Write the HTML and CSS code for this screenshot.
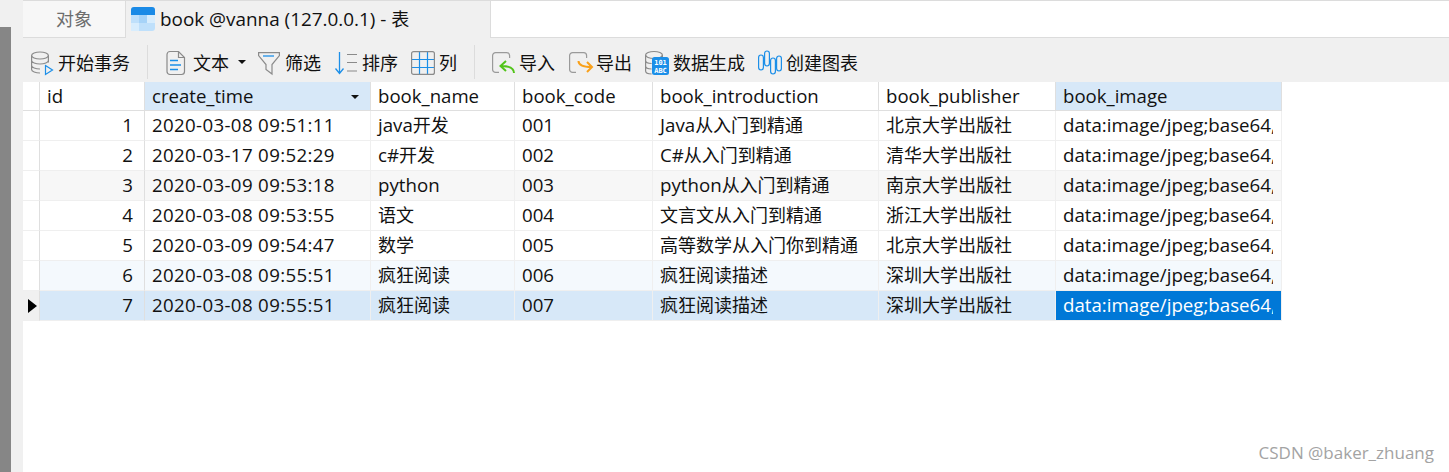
FILE: index.html
```html
<!DOCTYPE html>
<html lang="en">
<head>
    <meta charset="UTF-8">
    <title>book @vanna (127.0.0.1) - 表</title>
    <link rel="stylesheet" href="styles.css">
</head>
<body>
<div class="sidebar"><div class="sidebar-thumb"></div></div>
<div class="main">
    <div class="tabs">
        <div class="tab-objects">对象</div>
        <div class="tab-active">
            <svg class="tab-icon" width="24" height="24" viewBox="0 0 24 24">
                <rect x="0" y="0" width="24" height="24" rx="3" fill="#bfe0fb"/>
                <rect x="8" y="8" width="8" height="8" fill="#a6d3f8"/>
                <rect x="0" y="16" width="8" height="8" fill="#d8edfd"/>
                <rect x="16" y="8" width="8" height="8" fill="#d8edfd"/>
                <path d="M0 8V3a3 3 0 0 1 3-3h18a3 3 0 0 1 3 3v5z" fill="#1a8ae6"/>
            </svg>
            <span><span class="tab-lat">book @vanna (127.0.0.1) - </span>表</span>
        </div>
        <div class="tab-rest"></div>
    </div>

    <div class="toolbar">
        <div class="tool tool-begin">
            <svg width="24" height="26" viewBox="0 0 24 26" fill="none" stroke="#8a8a8a" stroke-width="1.2">
                <ellipse cx="9" cy="5.500" rx="8.400" ry="3.500"/>
                <path d="M.6 5.500v14c0 2 4 3.500 8.400 3.500M17.400 5.500v7M.6 10.500c0 2 4 3.500 8.400 3.500s8.400-1.500 8.400-3.500M.6 15.500c0 2 4 3.500 8.400 3.500"/>
                <path d="M14.500 15.500l7 4.500-7 4.500z" stroke="#1c8fe8" fill="#f0f0f0"/>
            </svg>
            <span>开始事务</span>
        </div>
        <div class="sep"></div>
        <div class="tool tool-text">
            <svg width="21" height="26" viewBox="0 0 21 26" fill="none">
                <path d="M5 1.500h8.500l6 6V21.500a3 3 0 0 1-3 3H5a3 3 0 0 1-3-3v-17a3 3 0 0 1 3-3z" stroke="#8a8a8a" stroke-width="1.200"/>
                <path d="M13.500 1.500v6h6" stroke="#8a8a8a" stroke-width="1.200"/>
                <path d="M5 10.500h8M5 15h11M5 19.500h8" stroke="#1c8fe8" stroke-width="1.300"/>
            </svg>
            <span>文本</span>
            <i class="caret"></i>
        </div>
        <div class="tool tool-filter">
            <svg width="22" height="26" viewBox="0 0 22 26" fill="none">
                <path d="M.6 2.600h20.800v3l-7.400 8.900v9.500l-6-4.500v-5L.6 5.600z" stroke="#8a8a8a" stroke-width="1.200"/>
                <path d="M5 6h11" stroke="#1c8fe8" stroke-width="1.300"/>
            </svg>
            <span>筛选</span>
        </div>
        <div class="tool tool-sort">
            <svg width="23" height="26" viewBox="0 0 23 26" fill="none">
                <path d="M3.500 2v21.500M-.5 18.500l4 5 4-5" stroke="#1c8fe8" stroke-width="1.300"/>
                <path d="M11 4.500h10M11 12.500h10M11 21h10" stroke="#8a8a8a" stroke-width="1.200"/>
            </svg>
            <span>排序</span>
        </div>
        <div class="tool tool-cols">
            <svg width="24" height="24" viewBox="0 0 24 24" fill="none">
                <path d="M8.500 1v22M16.500 1v22M1 8.500h22M1 16.500h22" stroke="#1c8fe8" stroke-width="1.200"/>
                <rect x="0.600" y="0.600" width="22.800" height="22.800" rx="2" stroke="#8a8a8a" stroke-width="1.200"/>
            </svg>
            <span>列</span>
        </div>
        <div class="sep"></div>
        <div class="tool tool-import">
            <svg width="24" height="26" viewBox="0 0 24 26" fill="none">
                <path d="M7 22.400H3.600a3 3 0 0 1-3-3V5.600a3 3 0 0 1 3-3h11a3 3 0 0 1 3 3V8" stroke="#9a9a9a" stroke-width="1.200"/>
                <path d="M22 23c0-4.500-3-7-13-7M14 11l-5.500 5 5.500 5" stroke="#52c41a" stroke-width="2"/>
            </svg>
            <span>导入</span>
        </div>
        <div class="tool tool-export">
            <svg width="24" height="26" viewBox="0 0 24 26" fill="none">
                <path d="M7 22.400H3.600a3 3 0 0 1-3-3V5.600a3 3 0 0 1 3-3h11a3 3 0 0 1 3 3V8" stroke="#9a9a9a" stroke-width="1.200"/>
                <path d="M9.500 11c0 4 3 6 13 6M18 12l5 5-5 5" stroke="#f9a11b" stroke-width="2"/>
            </svg>
            <span>导出</span>
        </div>
        <div class="tool tool-gen">
            <svg width="24" height="26" viewBox="0 0 24 26" fill="none">
                <ellipse cx="9" cy="5" rx="8.400" ry="3.500" stroke="#8a8a8a" stroke-width="1.200"/>
                <path d="M.6 5v16c0 2 3 3 6 3M17.400 5v2M.6 10.500c0 2 3 3 6 3M.6 16c0 2 3 3 6 3" stroke="#8a8a8a" stroke-width="1.200"/>
                <rect x="7" y="7" width="17" height="18" rx="2.500" fill="#1c8fe8"/>
                <text class="gen-label" x="15.500" y="14.500">101</text>
                <text class="gen-label" x="15.500" y="22.500">ABC</text>
            </svg>
            <span>数据生成</span>
        </div>
        <div class="tool tool-chart">
            <svg width="24" height="26" viewBox="0 0 24 26" fill="none" stroke="#1c8fe8" stroke-width="1.200">
                <rect x="0.600" y="5" width="4.800" height="15" rx="2.400"/>
                <rect x="6.600" y="1" width="4.800" height="15" rx="2.400"/>
                <rect x="12.600" y="8" width="4.800" height="16" rx="2.400"/>
                <rect x="18.600" y="6" width="4.800" height="15" rx="2.400"/>
            </svg>
            <span>创建图表</span>
        </div>
    </div>

    <table class="grid">
        <colgroup>
            <col class="col-mark"><col class="col-id"><col class="col-time"><col class="col-name">
            <col class="col-code"><col class="col-intro"><col class="col-pub"><col class="col-image">
        </colgroup>
        <thead>
            <tr>
                <th class="mark"></th>
                <th>id</th>
                <th class="selected">create_time<i class="caret sort-caret"></i></th>
                <th>book_name</th>
                <th>book_code</th>
                <th>book_introduction</th>
                <th>book_publisher</th>
                <th class="selected">book_image</th>
            </tr>
        </thead>
        <tbody>
            <tr>
                <td class="mark"></td><td class="num lat">1</td><td class="time">2020-03-08 09:51:11</td><td><span class="lat">java</span>开发</td><td class="lat">001</td><td><span class="lat">Java</span>从入门到精通</td><td>北京大学出版社</td><td class="lat"><div class="clip">data:image/jpeg;base64,</div></td>
            </tr>
            <tr>
                <td class="mark"></td><td class="num lat">2</td><td class="time">2020-03-17 09:52:29</td><td><span class="lat">c#</span>开发</td><td class="lat">002</td><td><span class="lat">C#</span>从入门到精通</td><td>清华大学出版社</td><td class="lat"><div class="clip">data:image/jpeg;base64,</div></td>
            </tr>
            <tr class="row-grey">
                <td class="mark"></td><td class="num lat">3</td><td class="time">2020-03-09 09:53:18</td><td class="lat">python</td><td class="lat">003</td><td><span class="lat">python</span>从入门到精通</td><td>南京大学出版社</td><td class="lat"><div class="clip">data:image/jpeg;base64,</div></td>
            </tr>
            <tr>
                <td class="mark"></td><td class="num lat">4</td><td class="time">2020-03-08 09:53:55</td><td>语文</td><td class="lat">004</td><td>文言文从入门到精通</td><td>浙江大学出版社</td><td class="lat"><div class="clip">data:image/jpeg;base64,</div></td>
            </tr>
            <tr>
                <td class="mark"></td><td class="num lat">5</td><td class="time">2020-03-09 09:54:47</td><td>数学</td><td class="lat">005</td><td>高等数学从入门你到精通</td><td>北京大学出版社</td><td class="lat"><div class="clip">data:image/jpeg;base64,</div></td>
            </tr>
            <tr class="row-tint">
                <td class="mark"></td><td class="num lat">6</td><td class="time">2020-03-08 09:55:51</td><td>疯狂阅读</td><td class="lat">006</td><td>疯狂阅读描述</td><td>深圳大学出版社</td><td class="lat"><div class="clip">data:image/jpeg;base64,</div></td>
            </tr>
            <tr class="row-current">
                <td class="mark"><i class="pointer"></i></td><td class="num lat">7</td><td class="time">2020-03-08 09:55:51</td><td>疯狂阅读</td><td class="lat">007</td><td>疯狂阅读描述</td><td>深圳大学出版社</td><td class="lat cell-active"><div class="clip">data:image/jpeg;base64,</div></td>
            </tr>
        </tbody>
    </table>

    <div class="watermark">CSDN @baker_zhuang</div>
</div>
</body>
</html>
```

FILE: styles.css
```css
* {
    margin: 0;
    padding: 0;
    box-sizing: border-box;
}

html, body {
    height: 472px;
    overflow: hidden;
}

body {
    display: flex;
    background: #fff;
    color: #111;
    font-family: "Open Sans", "Noto Sans CJK SC", sans-serif;
    font-size: 18px;
}

.sidebar {
    width: 23px;
    flex: none;
    background: #f0f0f0;
    padding-top: 27px;
    height: 100%;
}

.sidebar-thumb {
    width: 11px;
    height: 100%;
    background: #868686;
}

.main {
    flex: 1;
    position: relative;
    display: flex;
    flex-direction: column;
    min-width: 0;
}

/* tab strip */
.tabs {
    display: flex;
    height: 38px;
    background: #f0f0f0;
    border-top: 1px solid #dcdcdc;
}

.tab-objects {
    width: 103px;
    padding-left: 33px;
    line-height: 37px;
    color: #6d6d6d;
    background: #f7f7f7;
    border-right: 1px solid #dcdcdc;
    border-bottom: 1px solid #dcdcdc;
}

.tab-active {
    width: 364px;
    display: flex;
    align-items: center;
    gap: 5px;
    padding-left: 5px;
    padding-bottom: 2px;
}

.tab-lat {
    font-size: 18.9px;
}

.tab-rest {
    flex: 1;
    background: #fff;
    border-left: 1px solid #dcdcdc;
    border-bottom: 1px solid #dcdcdc;
}

/* toolbar */
.toolbar {
    display: flex;
    align-items: center;
    height: 44px;
    background: #f0f0f0;
    padding: 4px 0 0 8px;
}

.tool {
    display: flex;
    align-items: center;
    gap: 3px;
    white-space: nowrap;
}

.tool svg {
    margin-top: 2px;
    overflow: visible;
}

.sep {
    width: 1px;
    height: 34px;
    background: #dcdcdc;
}

.tool-begin { margin-right: 17px; }
.tool-text { margin-left: 17px; gap: 7px; }
.tool-filter { margin-left: 12px; gap: 5px; }
.tool-sort { margin-left: 15px; }
.tool-cols { margin-left: 13px; gap: 4px; }
.tool-cols + .sep { margin-left: 17px; }
.tool-import { margin-left: 17px; }
.tool-export { margin-left: 14px; }
.tool-gen { margin-left: 13px; gap: 4px; }
.tool-chart { margin-left: 13px; gap: 4px; }

.gen-label {
    font-family: "DejaVu Sans Mono", monospace;
    font-size: 7px;
    font-weight: 700;
    fill: #fff;
    text-anchor: middle;
}

.caret {
    display: inline-block;
    width: 0;
    height: 0;
    margin-left: 2px;
    border-left: 4px solid transparent;
    border-right: 4px solid transparent;
    border-top: 4px solid #111;
}

/* data grid */
.grid {
    table-layout: fixed;
    width: 1259px;
    border-collapse: separate;
    border-spacing: 0;
}

.col-mark { width: 17px; }
.col-id { width: 105px; }
.col-time { width: 226px; }
.col-name { width: 144px; }
.col-code { width: 138px; }
.col-intro { width: 226px; }
.col-pub { width: 177px; }
.col-image { width: 226px; }

.grid th,
.grid td {
    height: 30px;
    padding: 0 7px 2px;
    line-height: 24px;
    text-align: left;
    font-weight: 400;
    white-space: nowrap;
    overflow: hidden;
    border-right: 1px solid #efefef;
    border-bottom: 1px solid #efefef;
}

.grid th {
    height: 29px;
    padding-bottom: 0;
    position: relative;
    font-size: 18.6px;
    border-right-color: #dfdfdf;
    border-bottom: 1px solid #dfdfdf;
}

.grid th.selected {
    background: #d7e8f8;
}

.grid .mark {
    padding: 0;
    border-right-color: #dfdfdf;
}

.grid td.num {
    text-align: right;
    padding-right: 11px;
    border-right-color: #dfdfdf;
}

.lat {
    font-size: 18.7px;
}

.time {
    font-size: 18.7px;
    letter-spacing: 0.34px;
}

/* long base64 values get cut off before the cell edge */
.clip {
    width: 210px;
    overflow: hidden;
}

.sort-caret {
    position: absolute;
    right: 11px;
    top: 13px;
}

.row-grey td { background: #f7f7f7; }
.row-tint td { background: #f4f9fd; }
.row-current td { background: #d7e8f8; }
.row-grey td.mark,
.row-tint td.mark { background: #fff; }

.row-current td.mark {
    background: #f0f0f0;
    vertical-align: middle;
}

.grid td.cell-active {
    background: #0078d7;
    color: #fff;
}

.pointer {
    display: block;
    width: 0;
    height: 0;
    margin-left: 5px;
    border-top: 7px solid transparent;
    border-bottom: 7px solid transparent;
    border-left: 9px solid #000;
}

.watermark {
    position: absolute;
    right: 15px;
    bottom: 8px;
    font-size: 17px;
    color: #a3a3a3;
}
```
